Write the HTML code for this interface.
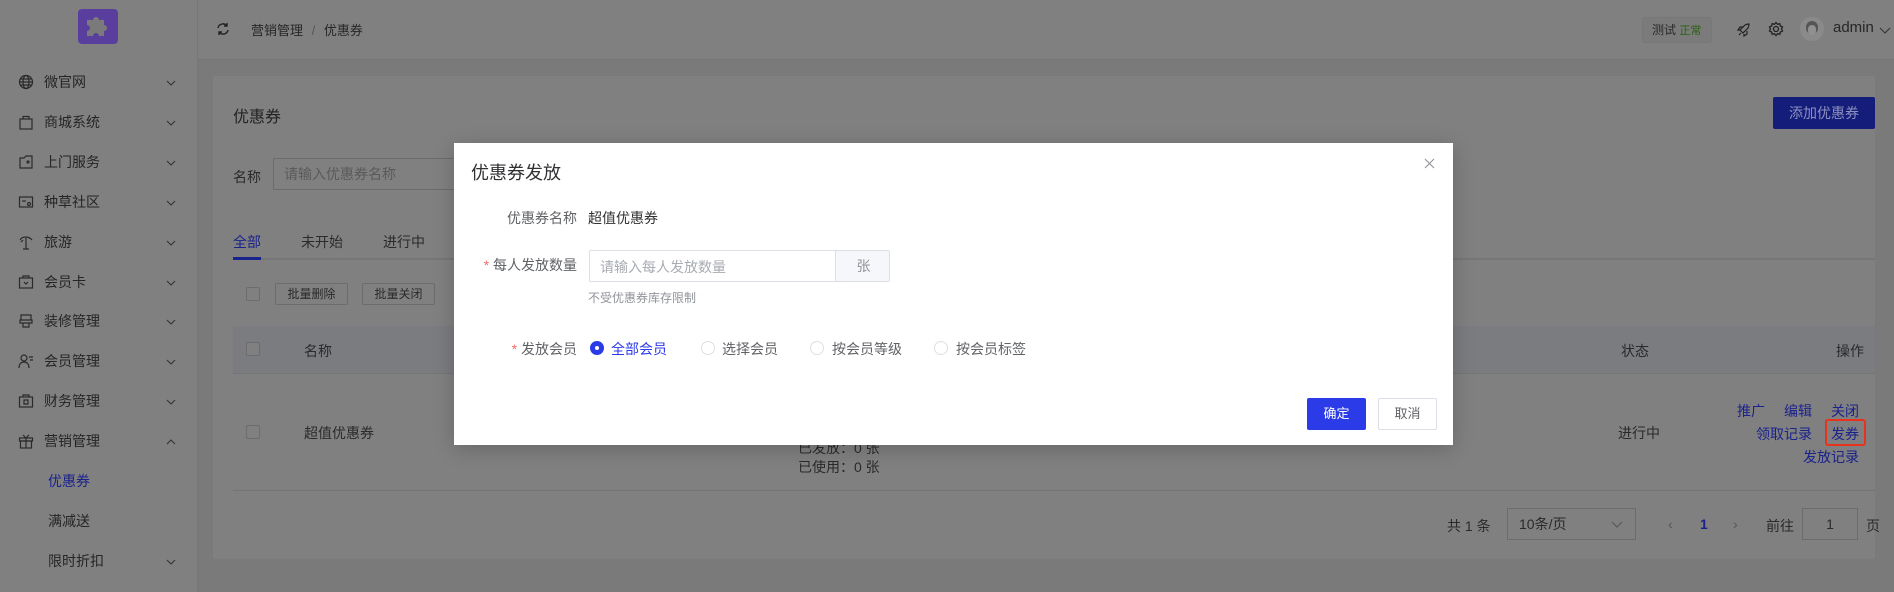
<!DOCTYPE html>
<html><head><meta charset="utf-8"><style>
*{margin:0;padding:0;box-sizing:border-box}
body{width:1894px;height:592px;overflow:hidden;background:#7a7a7b;font-family:"Liberation Sans","Noto Sans CJK SC",sans-serif;font-size:14px;color:#2b2b2b;position:relative}
.a{position:absolute;white-space:nowrap}
.side{position:absolute;left:0;top:0;width:198px;height:592px;background:#808080;border-right:1px solid #777}
.hdr{position:absolute;left:198px;top:0;right:0;height:60px;background:#808080;border-bottom:1px solid #767676}
.card{position:absolute;left:213px;top:76px;width:1662px;height:483px;background:#808080}
.mi{position:absolute;left:0;width:198px;height:40px}
.mi svg{position:absolute;left:18px;top:12px}
.mi .t{position:absolute;left:44px;top:10px;font-size:14px;color:#252525}
.mi .c{position:absolute;left:166px;top:16px}
.cb{position:absolute;width:14px;height:14px;border:1px solid #6c6c6c;border-radius:2px;background:#808080}
.dlg{position:absolute;left:454px;top:143px;width:999px;height:302px;background:#fff;box-shadow:0 4px 20px rgba(0,0,0,.2)}
.rad{position:absolute;width:14px;height:14px;border:1px solid #dcdfe6;border-radius:50%;background:#fff}
.blue{color:#1a228c}
</style></head><body>
<div class="side">
 <div class="a" style="left:78px;top:9px;width:40px;height:35px;background:#5a3e9e;border-radius:4px"></div>
 <svg class="a" style="left:84px;top:13px" width="28" height="27" viewBox="0 0 28 27"><path d="M3 7h6a3 3 0 1 1 6 0h5v5a3 3 0 1 1 0 6v5h-5a3 3 0 1 0-6 0H3v-5a3 3 0 1 0 0-6z" fill="#7a7a7a"/></svg>
 <div class="mi" style="top:62px"><svg width="16" height="16" viewBox="0 0 16 16" fill="none" stroke="#2a2a2a" stroke-width="1.2"><circle cx="8" cy="8" r="6.5"/><ellipse cx="8" cy="8" rx="3" ry="6.5"/><path d="M1.5 8h13M2.5 5h11M2.5 11h11"/></svg><span class="t">微官网</span><svg class="c" width="10" height="10" viewBox="0 0 10 10"><path d="M1 3l4 4 4-4" fill="none" stroke="#333" stroke-width="1.1"/></svg></div>
 <div class="mi" style="top:102px"><svg width="16" height="16" viewBox="0 0 16 16" fill="none" stroke="#2a2a2a" stroke-width="1.2"><rect x="2" y="5" width="12" height="10"/><path d="M5 5V2.5h6V5"/></svg><span class="t">商城系统</span><svg class="c" width="10" height="10" viewBox="0 0 10 10"><path d="M1 3l4 4 4-4" fill="none" stroke="#333" stroke-width="1.1"/></svg></div>
 <div class="mi" style="top:142px"><svg width="16" height="16" viewBox="0 0 16 16" fill="none" stroke="#2a2a2a" stroke-width="1.2"><path d="M2 4h4l2-2h6v12H2z"/><circle cx="10" cy="8" r="1"/></svg><span class="t">上门服务</span><svg class="c" width="10" height="10" viewBox="0 0 10 10"><path d="M1 3l4 4 4-4" fill="none" stroke="#333" stroke-width="1.1"/></svg></div>
 <div class="mi" style="top:182px"><svg width="16" height="16" viewBox="0 0 16 16" fill="none" stroke="#2a2a2a" stroke-width="1.2"><rect x="1.5" y="3" width="13" height="10"/><circle cx="11" cy="10" r="1.5"/><path d="M4 7h4"/></svg><span class="t">种草社区</span><svg class="c" width="10" height="10" viewBox="0 0 10 10"><path d="M1 3l4 4 4-4" fill="none" stroke="#333" stroke-width="1.1"/></svg></div>
 <div class="mi" style="top:222px"><svg width="16" height="16" viewBox="0 0 16 16" fill="none" stroke="#2a2a2a" stroke-width="1.2"><path d="M2 6c2-4 9-4 12 0M8 4v11M5 15h6M3 8l2-2"/></svg><span class="t">旅游</span><svg class="c" width="10" height="10" viewBox="0 0 10 10"><path d="M1 3l4 4 4-4" fill="none" stroke="#333" stroke-width="1.1"/></svg></div>
 <div class="mi" style="top:262px"><svg width="16" height="16" viewBox="0 0 16 16" fill="none" stroke="#2a2a2a" stroke-width="1.2"><rect x="1.5" y="4" width="13" height="10"/><path d="M5 4V2h6v2M6 8l2 2 2-2"/></svg><span class="t">会员卡</span><svg class="c" width="10" height="10" viewBox="0 0 10 10"><path d="M1 3l4 4 4-4" fill="none" stroke="#333" stroke-width="1.1"/></svg></div>
 <div class="mi" style="top:301px"><svg width="16" height="16" viewBox="0 0 16 16" fill="none" stroke="#2a2a2a" stroke-width="1.2"><path d="M3 2h10v5H3zM2 7h12v3H2zM5 10v4h6v-4"/></svg><span class="t">装修管理</span><svg class="c" width="10" height="10" viewBox="0 0 10 10"><path d="M1 3l4 4 4-4" fill="none" stroke="#333" stroke-width="1.1"/></svg></div>
 <div class="mi" style="top:341px"><svg width="16" height="16" viewBox="0 0 16 16" fill="none" stroke="#2a2a2a" stroke-width="1.2"><circle cx="6" cy="5" r="3"/><path d="M1 15c0-4 2-6 5-6s5 2 5 6M11 4h4M12 7h3"/></svg><span class="t">会员管理</span><svg class="c" width="10" height="10" viewBox="0 0 10 10"><path d="M1 3l4 4 4-4" fill="none" stroke="#333" stroke-width="1.1"/></svg></div>
 <div class="mi" style="top:381px"><svg width="16" height="16" viewBox="0 0 16 16" fill="none" stroke="#2a2a2a" stroke-width="1.2"><rect x="1.5" y="4" width="13" height="10"/><path d="M5 4V2h6v2M6 7h4v4H6z"/></svg><span class="t">财务管理</span><svg class="c" width="10" height="10" viewBox="0 0 10 10"><path d="M1 3l4 4 4-4" fill="none" stroke="#333" stroke-width="1.1"/></svg></div>
 <div class="mi" style="top:421px"><svg width="16" height="16" viewBox="0 0 16 16" fill="none" stroke="#2a2a2a" stroke-width="1.2"><rect x="1.5" y="5" width="13" height="3"/><rect x="2.5" y="8" width="11" height="7"/><path d="M8 5v10M5 2l3 3 3-3"/></svg><span class="t">营销管理</span><svg class="c" width="10" height="10" viewBox="0 0 10 10"><path d="M1 7l4-4 4 4" fill="none" stroke="#333" stroke-width="1.1"/></svg></div>
 <div class="a blue" style="left:48px;top:471px">优惠券</div>
 <div class="a" style="left:48px;top:511px;color:#252525">满减送</div>
 <div class="a" style="left:48px;top:551px;color:#252525">限时折扣</div>
 <svg class="a" style="left:166px;top:557px" width="10" height="10" viewBox="0 0 10 10"><path d="M1 3l4 4 4-4" fill="none" stroke="#333" stroke-width="1.1"/></svg>
</div>
<div class="hdr">
 <svg class="a" style="left:18px;top:22px" width="14" height="14" viewBox="0 0 14 14" fill="none" stroke="#222" stroke-width="1.4"><path d="M2 6a5 5 0 0 1 9-2M12 8a5 5 0 0 1-9 2M11 1v3H8M3 13v-3h3"/></svg>
 <div class="a" style="left:53px;top:20px;font-size:13px;color:#262626">营销管理 <span style="color:#555;margin:0 5px">/</span> 优惠券</div>
 <div class="a" style="left:1444px;top:17px;width:70px;height:26px;background:#7b7b7b;border:1px solid #777;border-radius:3px;font-size:12px;line-height:24px;padding-left:9px;color:#2a2a2a">测试 <span style="color:#2a5f12;font-size:11px">正常</span></div>
 <svg class="a" style="left:1538px;top:22px" width="16" height="16" viewBox="0 0 16 16" fill="none" stroke="#222" stroke-width="1.2"><path d="M6 10l-2-2 5-5c2-1 4-1 4-1s0 2-1 4l-5 5zM4 8l-2 0 2-3h3M8 12v2l3-2V9M3 13l2-2"/></svg>
 <svg class="a" style="left:1570px;top:21px" width="16" height="16" viewBox="0 0 16 16" fill="none" stroke="#222" stroke-width="1.3"><circle cx="8" cy="8" r="2.5"/><path d="M8 1.5l1.5 1.8 2.3-.6.6 2.3 2.1 1-.9 2 .9 2-2.1 1-.6 2.3-2.3-.6L8 14.5l-1.5-1.8-2.3.6-.6-2.3-2.1-1 .9-2-.9-2 2.1-1 .6-2.3 2.3.6z"/></svg>
 <div class="a" style="left:1602px;top:17px;width:24px;height:24px;border-radius:50%;background:#8a8a8a;overflow:hidden"><div style="position:absolute;left:6px;top:4px;width:12px;height:13px;border-radius:6px;background:#555"></div><div style="position:absolute;left:8px;top:8px;width:8px;height:10px;border-radius:4px;background:#909090"></div></div>
 <div class="a" style="left:1635px;top:19px;font-size:15px;color:#262626">admin</div>
 <svg class="a" style="left:1681px;top:25px" width="12" height="10" viewBox="0 0 12 10"><path d="M1 3l5 5 5-5" fill="none" stroke="#333" stroke-width="1.1"/></svg>
</div>
<div class="card">
 <div class="a" style="left:20px;top:27px;font-size:16px;color:#222">优惠券</div>
 <div class="a" style="left:1560px;top:21px;width:102px;height:32px;background:#151d7a;border-radius:2px;color:#8c90c0;font-size:14px;line-height:32px;text-align:center">添加优惠券</div>
 <div class="a" style="left:20px;top:91px;color:#2a2a2a">名称</div>
 <div class="a" style="left:60px;top:82px;width:240px;height:32px;border:1px solid #6c6c6c;color:#5a5a5a;line-height:30px;padding-left:10px;font-size:14px">请输入优惠券名称</div>
 <div class="a blue" style="left:20px;top:156px">全部</div>
 <div class="a" style="left:88px;top:156px;color:#2a2a2a">未开始</div>
 <div class="a" style="left:170px;top:156px;color:#2a2a2a">进行中</div>
 <div class="a" style="left:20px;top:182px;width:1642px;height:2px;background:#767676"></div>
 <div class="a" style="left:20px;top:181px;width:28px;height:3px;background:#1a228c"></div>
 <div class="cb" style="left:33px;top:211px"></div>
 <div class="a" style="left:62px;top:207px;width:73px;height:22px;border:1px solid #6c6c6c;font-size:12px;line-height:20px;text-align:center;color:#2a2a2a;border-radius:2px">批量删除</div>
 <div class="a" style="left:149px;top:207px;width:73px;height:22px;border:1px solid #6c6c6c;font-size:12px;line-height:20px;text-align:center;color:#2a2a2a;border-radius:2px">批量关闭</div>
 <div class="a" style="left:20px;top:250px;width:1642px;height:48px;background:#7b7c80;border-bottom:1px solid #747474"></div>
 <div class="cb" style="left:33px;top:266px"></div>
 <div class="a" style="left:91px;top:265px;color:#2a2a2a">名称</div>
 <div class="a" style="left:1408px;top:265px;color:#2a2a2a">状态</div>
 <div class="a" style="left:1623px;top:265px;color:#2a2a2a">操作</div>
 <div class="cb" style="left:33px;top:349px"></div>
 <div class="a" style="left:91px;top:347px;color:#2a2a2a">超值优惠券</div>
 <div class="a" style="left:585px;top:362px;color:#2a2a2a">已发放：0 张</div>
 <div class="a" style="left:585px;top:381px;color:#2a2a2a">已使用：0 张</div>
 <div class="a" style="left:1405px;top:347px;color:#2a2a2a">进行中</div>
 <div class="a blue" style="left:1524px;top:325px">推广</div>
 <div class="a blue" style="left:1571px;top:325px">编辑</div>
 <div class="a blue" style="left:1618px;top:325px">关闭</div>
 <div class="a blue" style="left:1543px;top:348px">领取记录</div>
 <div class="a blue" style="left:1618px;top:348px">发券</div>
 <div class="a" style="left:1612px;top:343px;width:41px;height:27px;border:2px solid #e8321e;border-radius:3px"></div>
 <div class="a blue" style="left:1590px;top:371px">发放记录</div>
 <div class="a" style="left:20px;top:414px;width:1642px;height:1px;background:#747474"></div>
 <div class="a" style="left:1234px;top:440px;color:#2a2a2a">共 1 条</div>
 <div class="a" style="left:1294px;top:432px;width:129px;height:32px;border:1px solid #6c6c6c;line-height:30px;padding-left:11px;color:#2a2a2a">10条/页</div>
 <svg class="a" style="left:1398px;top:443px" width="12" height="10" viewBox="0 0 12 10"><path d="M1 3l5 5 5-5" fill="none" stroke="#555" stroke-width="1.1"/></svg>
 <div class="a" style="left:1455px;top:440px;color:#555">&lsaquo;</div>
 <div class="a blue" style="left:1487px;top:440px;font-weight:bold">1</div>
 <div class="a" style="left:1520px;top:440px;color:#555">&rsaquo;</div>
 <div class="a" style="left:1553px;top:440px;color:#2a2a2a">前往</div>
 <div class="a" style="left:1589px;top:432px;width:56px;height:32px;border:1px solid #6c6c6c;line-height:30px;text-align:center;color:#2a2a2a">1</div>
 <div class="a" style="left:1653px;top:440px;color:#2a2a2a">页</div>
</div>
<div class="dlg">
 <div class="a" style="left:17px;top:16px;font-size:18px;color:#303133">优惠券发放</div>
 <svg class="a" style="left:970px;top:15px" width="11" height="11" viewBox="0 0 11 11"><path d="M1 1l9 9M10 1l-9 9" stroke="#909399" stroke-width="1.1"/></svg>
 <div class="a" style="left:20px;top:65px;width:103px;text-align:right;color:#606266">优惠券名称</div>
 <div class="a" style="left:134px;top:65px;color:#303133">超值优惠券</div>
 <div class="a" style="left:20px;top:112px;width:103px;text-align:right;color:#606266"><span style="color:#f56c6c">* </span>每人发放数量</div>
 <div class="a" style="left:135px;top:107px;width:301px;height:32px;border:1px solid #dcdfe6;border-radius:2px;overflow:hidden">
  <div class="a" style="left:10px;top:6px;color:#a8abb2">请输入每人发放数量</div>
  <div class="a" style="left:245px;top:0;width:56px;height:30px;background:#f5f7fa;border-left:1px solid #dcdfe6;text-align:center;line-height:30px;color:#909399">张</div>
 </div>
 <div class="a" style="left:134px;top:146px;font-size:12px;color:#909399">不受优惠券库存限制</div>
 <div class="a" style="left:20px;top:196px;width:103px;text-align:right;color:#606266"><span style="color:#f56c6c">* </span>发放会员</div>
 <div class="rad" style="left:136px;top:198px;background:#2b3be8;border-color:#2b3be8"><div style="position:absolute;left:4px;top:4px;width:4px;height:4px;border-radius:50%;background:#fff"></div></div>
 <div class="a" style="left:157px;top:196px;color:#2b3be8">全部会员</div>
 <div class="rad" style="left:247px;top:198px"></div>
 <div class="a" style="left:268px;top:196px;color:#606266">选择会员</div>
 <div class="rad" style="left:356px;top:198px"></div>
 <div class="a" style="left:378px;top:196px;color:#606266">按会员等级</div>
 <div class="rad" style="left:480px;top:198px"></div>
 <div class="a" style="left:502px;top:196px;color:#606266">按会员标签</div>
 <div class="a" style="left:853px;top:255px;width:59px;height:32px;background:#2b3be8;border-radius:2px;color:#fff;font-size:13px;line-height:32px;text-align:center">确定</div>
 <div class="a" style="left:924px;top:255px;width:59px;height:32px;border:1px solid #dcdfe6;border-radius:2px;color:#606266;font-size:13px;line-height:30px;text-align:center">取消</div>
</div>
</body></html>
